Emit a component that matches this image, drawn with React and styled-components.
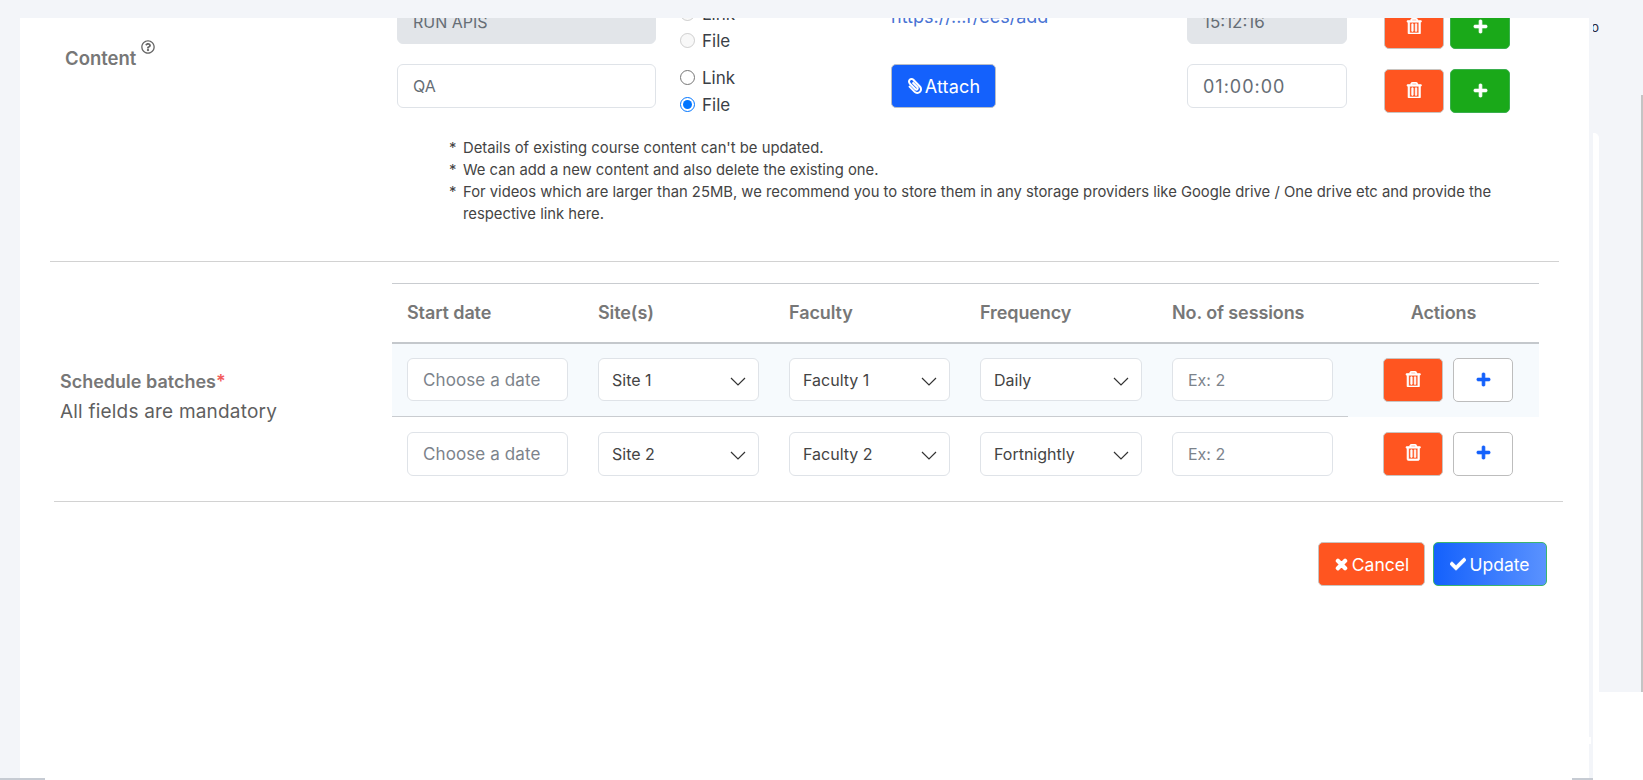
import React from "react";
import styled, { createGlobalStyle } from "styled-components";
import { FaRegTrashAlt, FaPlus, FaPaperclip, FaTimes, FaCheck, FaRegQuestionCircle } from "react-icons/fa";

const Global = createGlobalStyle`
  * { box-sizing: border-box; }
  html, body { margin: 0; padding: 0; height: 100%; overflow: hidden; background: #f3f5f9; }
  body { font-family: Inter, "Liberation Sans", sans-serif; }
`;

const Shell = styled.div`
  display: flex;
  height: 780px;
  width: 1643px;
  padding-left: 20px;
  position: relative;
  overflow: hidden;
`;
const Modal = styled.main`
  width: 1569px;
  margin-top: 18px;
  background: #fff;
  overflow: hidden;
`;
const Scrolled = styled.div`
  margin-top: -18px;
`;
const Rail = styled.aside`
  flex: 1;
  display: flex;
  flex-direction: column;
  height: 692px;
  padding-top: 23px;
  padding-left: 4px;
  position: relative;
`;
const Clipped = styled.div`
  width: 6px;
  height: 10px;
  overflow: hidden;
  font-size: 13px;
  line-height: 8px;
  color: #1f2a44;
  direction: rtl;
`;
const RailCard = styled.div`
  margin-top: 100px;
  width: 6px;
  flex: 1;
  background: #fff;
  border-top-right-radius: 5px;
  margin-bottom: -88px;
`;
const Scrollbar = styled.div`
  position: absolute;
  right: 0;
  top: 95px;
  bottom: 0;
  width: 2px;
  background: #c4c4c4;
`;
const BottomWhite = styled.div`
  position: absolute;
  left: 1593px;
  right: 0;
  top: 692px;
  bottom: 0;
  background: #fff;
`;
const BottomLineLeft = styled.div`
  position: absolute;
  left: 0;
  bottom: 0;
  width: 45px;
  height: 2px;
  background: #c6cbd3;
`;
const BottomLineRight = styled.div`
  position: absolute;
  left: 1572px;
  bottom: 0;
  width: 21px;
  height: 2px;
  background: #c6cbd3;
`;
const Notch = styled.div`
  position: absolute;
  left: 1589px;
  top: 737px;
  width: 2px;
  height: 7px;
  background: #fff;
`;

const ContentSection = styled.section`
  display: grid;
  grid-template-columns: 377px 1fr;
  height: 261px;
`;
const ContentLabel = styled.div`
  padding: 47px 0 0 45px;
  font-size: 18.5px;
  line-height: 22px;
  font-weight: 600;
  color: #777;
  display: flex;
  align-items: flex-start;
  gap: 5px;
`;
const HelpIcon = styled(FaRegQuestionCircle)`
  font-size: 14px;
  margin-top: -7px;
  color: #666;
`;
const ContentRows = styled.div`
  display: flex;
  flex-direction: column;
`;
const ContentRow = styled.div`
  display: grid;
  grid-template-columns: 259px 24px 211px 296px 160px 37px auto;
  height: 64px;
`;
const Field = styled.div`
  height: 44px;
  padding: 0 15px;
  display: flex;
  align-items: center;
  border: 1px solid ${p => (p.$disabled ? "#e2e5e9" : "#dfe3e8")};
  border-radius: 6px;
  background: ${p => (p.$disabled ? "#e2e5e9" : "#fff")};
  color: #666d75;
  font-size: 16px;
  font-weight: 400;
`;
const TimeField = styled(Field)`
  font-size: ${p => (p.$disabled ? "17px" : "18px")};
  letter-spacing: ${p => (p.$disabled ? "0" : "1px")};
`;
const RadioColumn = styled.div`
  grid-column: 3;
  display: flex;
  flex-direction: column;
  padding-top: 4px;
  gap: 7px;
`;
const RadioLabel = styled.label`
  display: flex;
  align-items: center;
  gap: 7px;
  height: 20px;
  font-size: 17px;
  color: #3a3f47;
`;
const Radio = styled.input.attrs({ type: "radio" })`
  margin: -2px 0 0;
  width: 15px;
  height: 15px;
`;
const LinkCell = styled.a`
  grid-column: 4;
  padding-top: 7px;
  color: #4a74d4;
  font-size: 18px;
  line-height: 20px;
`;
const AttachCell = styled.div`
  grid-column: 4;
`;
const AttachButton = styled.button`
  width: 105px;
  height: 44px;
  display: inline-flex;
  align-items: center;
  justify-content: center;
  gap: 2px;
  border: 1px solid #b9bec7;
  border-radius: 5px;
  background: #1461fc;
  color: #fff;
  font: 400 18px Inter, sans-serif;
  letter-spacing: 0.2px;
`;
const ClipIcon = styled(FaPaperclip)`
  transform: scaleX(-1);
  font-size: 16px;
`;
const TimeCell = styled.div`
  grid-column: 5;
`;
const ActionCell = styled.div`
  grid-column: 7;
  display: flex;
  gap: 6px;
  padding-top: 5px;
`;
const SquareButton = styled.button`
  width: 60px;
  height: 44px;
  display: flex;
  align-items: center;
  justify-content: center;
  border-radius: 5px;
  padding: 0 0 2px;
  border: 1px solid ${p => ({ danger: "#c9c4c0", success: "#3aaf4e", ghost: "#bdbdbd" }[p.$kind])};
  background: ${p => ({ danger: "#ff5520", success: "#1aa919", ghost: "#fff" }[p.$kind])};
  color: ${p => (p.$kind === "ghost" ? "#1461fc" : "#fff")};
`;
const TrashIcon = styled(FaRegTrashAlt)`
  font-size: 16.5px;
  stroke: currentColor;
  stroke-width: 20px;
`;
const PlusIcon = styled(FaPlus)`
  font-size: 15px;
  stroke: currentColor;
  stroke-width: 25px;
`;
const Notes = styled.ul`
  margin: 9px 0 0;
  padding: 0 0 0 52px;
  list-style: none;
  width: 1126px;
`;
const Note = styled.li`
  position: relative;
  padding-left: 14px;
  font-size: 14.8px;
  line-height: 22px;
  color: #444;
  &::before {
    content: "*";
    position: absolute;
    left: 0;
    top: 0;
  }
`;
const Rule = styled.hr`
  margin: 0 0 0 ${p => p.$left}px;
  width: 1509px;
  border: 0;
  border-top: 1px solid #d2d2d2;
`;
const BatchSection = styled.section`
  display: grid;
  grid-template-columns: 372px 1147px;
  padding-top: 21px;
  height: 239px;
`;
const BatchLabel = styled.div`
  padding: 0 0 0 40px;
  align-self: center;
  margin-top: 9px;
`;
const BatchTitle = styled.div`
  font-size: 18px;
  font-weight: 600;
  color: #777;
  line-height: 29px;
`;
const Star = styled.span`
  color: #f25c5c;
`;
const BatchHint = styled.div`
  font-size: 19px;
  letter-spacing: 0.2px;
  color: #5f5f5f;
  line-height: 31px;
`;
const Table = styled.table`
  border-collapse: collapse;
  table-layout: fixed;
  width: 1147px;
  align-self: start;
  height: 0;
`;
const HeadCell = styled.th`
  width: ${p => p.$w || 191}px;
  height: 59px;
  padding: 0 15px;
  font-size: 18px;
  font-weight: 600;
  letter-spacing: -0.1px;
  color: #777;
  text-align: ${p => (p.$center ? "center" : "left")};
  border-top: 1px solid #c9ccd0;
  border-bottom: 2px solid #c4c8cc;
`;
const Row = styled.tr`
  height: ${p => p.$h}px;
  background: ${p => (p.$tint ? "#f6fafd" : "transparent")};
`;
const Cell = styled.td`
  padding: 0 15px;
  vertical-align: middle;
  border-bottom: ${p => (p.$line ? "1px solid #c9ccd0" : "0")};
`;
const DateField = styled(Field)`
  width: 161px;
  height: ${p => p.$h}px;
  color: #7c838b;
  font-size: 17px;
  letter-spacing: 0.1px;
`;
const SessionField = styled(Field)`
  width: 161px;
  height: ${p => p.$h}px;
  color: #7c838b;
`;
const SelectField = styled(Field)`
  width: ${p => p.$w || 161}px;
  height: ${p => p.$h}px;
  justify-content: space-between;
  padding: 0 12px 0 13px;
  color: #444;
`;
const ChevronSvg = styled.svg`
  width: 16px;
  height: 16px;
  margin-top: 2px;
  flex: none;
  fill: none;
  stroke: #333;
  stroke-width: 1.2;
`;
const Actions = styled.div`
  display: flex;
  justify-content: center;
  gap: 10px;
  padding-left: 9px;
`;
const Footer = styled.div`
  display: flex;
  justify-content: flex-end;
  gap: 8px;
  padding: 40px 42px 0 0;
`;
const FooterButton = styled.button`
  height: 44px;
  width: ${p => p.$w}px;
  display: flex;
  align-items: center;
  justify-content: center;
  gap: 3px;
  border-radius: 5px;
  color: #fff;
  font: 400 17.5px Inter, sans-serif;
  border: 1px solid ${p => (p.$primary ? "#3cb46e" : "#c9c4c0")};
  background: ${p => (p.$primary ? "linear-gradient(90deg, #1461fc, #5a92ff)" : "#ff5520")};
`;
const CancelIcon = styled(FaTimes)`
  font-size: 15px;
  stroke: currentColor;
  stroke-width: 50px;
`;
const UpdateIcon = styled(FaCheck)`
  font-size: 16px;
  stroke: currentColor;
  stroke-width: 30px;
`;

const SelectBox = ({ value, h, w }) => (
  <SelectField $h={h} $w={w}>
    {value}
    <ChevronSvg viewBox="0 0 16 16"><path d="M1 5l7 7 7-7" /></ChevronSvg>
  </SelectField>
);

const Buttons = ({ kind }) => (
  <>
    <SquareButton $kind="danger"><TrashIcon /></SquareButton>
    <SquareButton $kind={kind}><PlusIcon /></SquareButton>
  </>
);

const batches = [
  { site: "Site 1", faculty: "Faculty 1", freq: "Daily", h: 43, rowH: 74, tint: true },
  { site: "Site 2", faculty: "Faculty 2", freq: "Fortnightly", h: 44, rowH: 74 },
];

export default function App() {
  return (
    <Shell>
      <Global />
      <Modal>
        <Scrolled>
          <ContentSection>
            <ContentLabel>Content<HelpIcon /></ContentLabel>
            <ContentRows>
              <ContentRow>
                <Field $disabled>RUN APIS</Field>
                <RadioColumn>
                  <RadioLabel><Radio disabled name="a" />Link</RadioLabel>
                  <RadioLabel><Radio disabled name="a" />File</RadioLabel>
                </RadioColumn>
                <LinkCell>https://...r/ees/add</LinkCell>
                <TimeCell><TimeField $disabled>15:12:16</TimeField></TimeCell>
                <ActionCell><Buttons kind="success" /></ActionCell>
              </ContentRow>
              <ContentRow>
                <Field>QA</Field>
                <RadioColumn>
                  <RadioLabel><Radio name="b" />Link</RadioLabel>
                  <RadioLabel><Radio name="b" defaultChecked />File</RadioLabel>
                </RadioColumn>
                <AttachCell><AttachButton><ClipIcon />Attach</AttachButton></AttachCell>
                <TimeCell><TimeField>01:00:00</TimeField></TimeCell>
                <ActionCell><Buttons kind="success" /></ActionCell>
              </ContentRow>
              <Notes>
                <Note>Details of existing course content can't be updated.</Note>
                <Note>We can add a new content and also delete the existing one.</Note>
                <Note>For videos which are larger than 25MB, we recommend you to store them in any storage providers like Google drive / One drive etc and provide the respective link here.</Note>
              </Notes>
            </ContentRows>
          </ContentSection>
          <Rule $left={30} />
          <BatchSection>
            <BatchLabel>
              <BatchTitle>Schedule batches<Star>*</Star></BatchTitle>
              <BatchHint>All fields are mandatory</BatchHint>
            </BatchLabel>
            <Table>
              <thead>
                <tr>
                  <HeadCell>Start date</HeadCell>
                  <HeadCell>Site(s)</HeadCell>
                  <HeadCell>Faculty</HeadCell>
                  <HeadCell $w={192}>Frequency</HeadCell>
                  <HeadCell>No. of sessions</HeadCell>
                  <HeadCell $center>Actions</HeadCell>
                </tr>
              </thead>
              <tbody>
                {batches.map(b => (
                  <Row key={b.site} $h={b.rowH} $tint={b.tint}>
                    <Cell $line={b.tint}><DateField $h={b.h}>Choose a date</DateField></Cell>
                    <Cell $line={b.tint}><SelectBox value={b.site} h={b.h} /></Cell>
                    <Cell $line={b.tint}><SelectBox value={b.faculty} h={b.h} /></Cell>
                    <Cell $line={b.tint}><SelectBox value={b.freq} h={b.h} w={162} /></Cell>
                    <Cell $line={b.tint}><SessionField $h={b.h}>Ex: 2</SessionField></Cell>
                    <Cell><Actions><Buttons kind="ghost" /></Actions></Cell>
                  </Row>
                ))}
              </tbody>
            </Table>
          </BatchSection>
          <Rule $left={34} />
          <Footer>
            <FooterButton $w={107}><CancelIcon />Cancel</FooterButton>
            <FooterButton $w={114} $primary><UpdateIcon />Update</FooterButton>
          </Footer>
        </Scrolled>
      </Modal>
      <Rail>
        <Clipped>o</Clipped>
        <RailCard />
        <Scrollbar />
      </Rail>
      <BottomWhite />
      <BottomLineLeft />
      <BottomLineRight />
      <Notch />
    </Shell>
  );
}
